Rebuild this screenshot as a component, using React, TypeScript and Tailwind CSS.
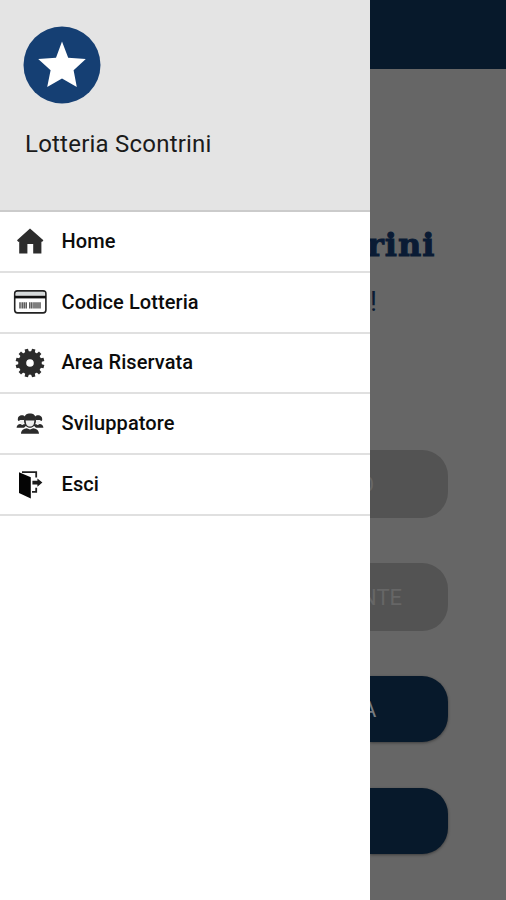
import type { ReactNode } from 'react';

interface MenuItem {
  label: string;
  icon: ReactNode;
}

function StarLogo() {
  return (
    <svg viewBox="0 0 78 78" className="w-[78px] h-[78px]">
      <circle cx="39" cy="39" r="38.5" fill="#153f73" />
      <path
        d="M39 15.5 L45.2 31.8 L62.8 32.9 L50.6 44.2 L53.8 61 L39 52.6 L24.2 61 L27.6 44.2 L15.2 32.9 L33 31.8 Z"
        fill="#fff"
      />
    </svg>
  );
}

function HomeIcon() {
  return (
    <svg viewBox="0 0 34 30" className="w-[34px] h-[30px]" fill="#2d2d2d">
      <path d="M17 2.4 L30.4 14.2 L29 16 L28.4 15.6 V27.4 H20.2 V18 H14.4 V27.4 H6.2 V15.6 L5.4 16 L4 14.2 Z" />
    </svg>
  );
}

function CardIcon() {
  return (
    <svg viewBox="0 0 34 30" className="w-[34px] h-[30px]">
      <rect x="1.7" y="3.9" width="31.2" height="22" rx="2.8" fill="#fff" stroke="#222" strokeWidth="1.6" />
      <rect x="2.9" y="5" width="28.8" height="3.4" fill="#d6dadb" />
      <rect x="1.6" y="8.7" width="31.4" height="2.7" fill="#111" />
      <path
        d="M7 15.2V21.4M9.2 15.2V21.4M11.2 15.2V21.4M13.2 15.2V21.4M16.8 15.2V21.4M18.8 15.2V21.4M21 15.2V21.4M23 15.2V21.4M25 15.2V21.4M27 15.2V21.4"
        stroke="#555"
        strokeWidth="1.5"
      />
    </svg>
  );
}

function GearIcon() {
  const teeth = Array.from({ length: 12 }, (_, i) => i * 30 + 15);
  return (
    <svg viewBox="0 0 34 30" className="w-[34px] h-[30px]">
      <g fill="#2b2b2b">
        {teeth.map(angle => (
          <path key={angle} d="M15 5 L15.3 0.6 H18.7 L19 5 Z" transform={`rotate(${angle} 17 15)`} />
        ))}
      </g>
      <circle cx="17" cy="15" r="7.8" fill="none" stroke="#2b2b2b" strokeWidth="8" />
    </svg>
  );
}

function PeopleIcon() {
  return (
    <svg viewBox="0 0 34 30" className="w-[34px] h-[30px]" fill="#2b2b2b">
      {/* side figures */}
      <path d="M4.8 11C4.5 7.8 6.5 6.2 9 6.2c1.5 0 2.6.6 3.2 1.8L11.5 12H5.5Z" />
      <path d="M29.2 11C29.5 7.8 27.5 6.2 25 6.2c-1.5 0-2.6.6-3.2 1.8l.7 4H28.5Z" />
      <path d="M6.4 11h4.8v2.5L9 15.2 6.8 13.5Z" fill="#eee" />
      <path d="M27.6 11h-4.8v2.5L25 15.2 27.2 13.5Z" fill="#eee" />
      <path d="M3.6 18.8c0-2.6 1.8-3.5 3.8-3.8l1.8 1 2-1 2.4 1.2L11 18.8Z" />
      <path d="M30.4 18.8c0-2.6-1.8-3.5-3.8-3.8l-1.8 1-2-1-2.4 1.2L23 18.8Z" />
      {/* front figure */}
      <path d="M11.4 9C11.6 5.8 14 4.4 17 4.4S22.4 5.8 22.6 9l.4 3c-.2 4-3 6.8-6 6.8s-5.8-2.8-6-6.8Z" />
      <path d="M12.6 11.6h8.8l-.6 3.4c-.8 1.8-2.2 2.6-3.8 2.6s-3-.8-3.8-2.6Z" fill="#eee" />
      <path d="M8 24.8c0-3.7 2.8-4.9 5.8-5.5l3.2 1.2 3.2-1.2c3 .6 5.8 1.8 5.8 5.5Z" />
    </svg>
  );
}

function ExitIcon() {
  return (
    <svg viewBox="0 0 34 30" className="w-[34px] h-[30px]">
      <path d="M9 2.2H23.2V7.6M23.2 17.8V21.8H19" fill="none" stroke="#222" strokeWidth="1.8" />
      <path d="M6 2.2L17.8 7.2V28.4L6 23Z" fill="#050505" />
      <path d="M19.4 10.8H24.4V8.4L29.4 12.6L24.4 16.8V14.4H19.4Z" fill="#1b1b1b" />
    </svg>
  );
}

const menuItems: MenuItem[] = [
  { label: 'Home', icon: <HomeIcon /> },
  { label: 'Codice Lotteria', icon: <CardIcon /> },
  { label: 'Area Riservata', icon: <GearIcon /> },
  { label: 'Sviluppatore', icon: <PeopleIcon /> },
  { label: 'Esci', icon: <ExitIcon /> },
];

function Drawer() {
  return (
    <aside className="relative w-[370px] shrink-0 bg-white">
      <div className="h-[212px] bg-[#e4e4e4] border-b-2 border-[#cbcbcb] pl-[23px] pt-[26px]">
        <StarLogo />
        <h1 className="mt-[24px] ml-[2px] text-[24px] leading-8 tracking-[0.22px] text-[#1b1b1b]">
          Lotteria Scontrini
        </h1>
      </div>
      <nav>
        {menuItems.map(item => (
          <a
            key={item.label}
            className="flex items-center h-[60.8px] pl-[13px] gap-[14.5px] border-b-2 border-[#e0e0e0] text-[20px] font-medium tracking-[0.08px] text-[#0c0c0c]"
          >
            {item.icon}
            <span className="-mt-px">{item.label}</span>
          </a>
        ))}
      </nav>
    </aside>
  );
}

function PageBehind() {
  return (
    <main className="w-[136px] bg-[#666]">
      <div className="h-[69px] bg-[#07192b]" />
      <div className="h-[48px] mt-[152px] -ml-[3px] font-['DejaVu_Serif'] font-bold text-[32px] leading-[48px] tracking-[1px] text-[#0a1b34] [-webkit-text-stroke:1px_#0a1b34]">
        rini
      </div>
      <div className="mt-[17px] h-[32px] text-[27px] leading-8 text-[#0a1b34]">!</div>
      <div className="flex flex-col mt-[132px] text-[22px]">
        <div className="flex items-center w-[78px] h-[68px] rounded-r-[26px] bg-[#535353] text-[#666]">
          <span className="-ml-[11px]">O</span>
        </div>
        <div className="flex items-center w-[78px] h-[68px] mt-[45px] rounded-r-[26px] bg-[#535353] text-[#666]">
          <span className="-ml-[9px]">NTE</span>
        </div>
        <div className="flex items-center w-[78px] h-[66px] mt-[45px] rounded-r-[26px] bg-[#07192b] text-[#777c80] shadow-[0_1px_3px_rgba(0,0,0,0.4)]">
          <span className="-ml-[8px]">A</span>
        </div>
        <div className="w-[78px] h-[66px] mt-[46px] rounded-r-[26px] bg-[#07192b] shadow-[0_1px_3px_rgba(0,0,0,0.4)]" />
      </div>
    </main>
  );
}

export default function App() {
  return (
    <div className="flex w-[506px] h-[900px] overflow-hidden font-['Roboto',sans-serif]">
      <Drawer />
      <PageBehind />
    </div>
  );
}
